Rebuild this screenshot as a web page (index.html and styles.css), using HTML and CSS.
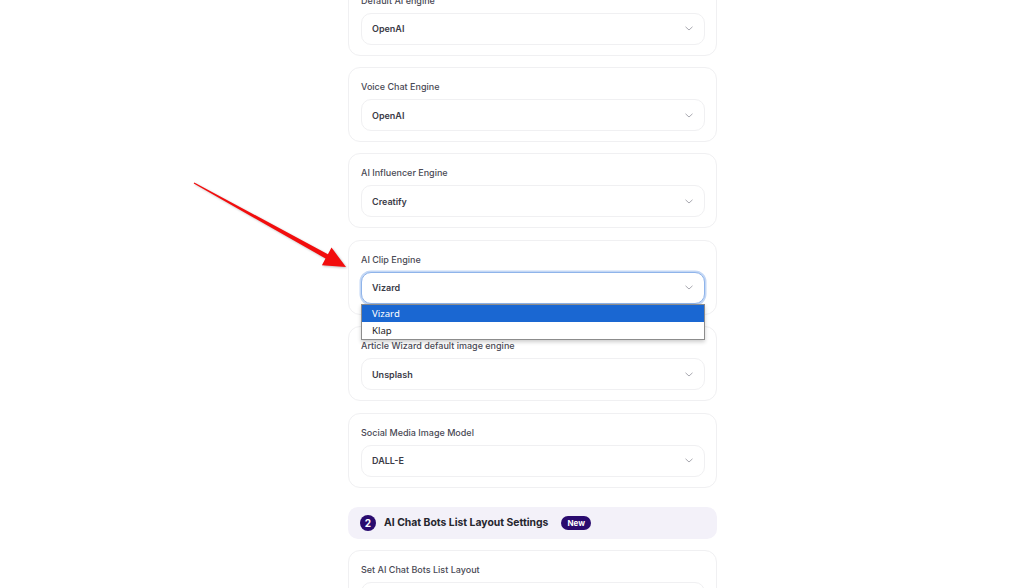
FILE: index.html
```html
<!DOCTYPE html>
<html lang="en">
<head>
<meta charset="utf-8">
<title>Settings</title>
<link rel="stylesheet" href="styles.css">
</head>
<body>
<main class="page">
  <div class="column">
    <section class="card">
      <div class="label">Default AI engine</div>
      <div class="select"><span>OpenAI</span><svg class="chev" viewBox="0 0 8 5"><path d="M0.5 0.8 L4 4 L7.5 0.8"/></svg></div>
    </section>
    <section class="card">
      <div class="label">Voice Chat Engine</div>
      <div class="select"><span>OpenAI</span><svg class="chev" viewBox="0 0 8 5"><path d="M0.5 0.8 L4 4 L7.5 0.8"/></svg></div>
    </section>
    <section class="card">
      <div class="label">AI Influencer Engine</div>
      <div class="select"><span>Creatify</span><svg class="chev" viewBox="0 0 8 5"><path d="M0.5 0.8 L4 4 L7.5 0.8"/></svg></div>
    </section>
    <section class="card">
      <div class="label">AI Clip Engine</div>
      <div class="select focused"><span>Vizard</span><svg class="chev" viewBox="0 0 8 5"><path d="M0.5 0.8 L4 4 L7.5 0.8"/></svg>
        <ul class="dropdown">
          <li class="active">Vizard</li>
          <li>Klap</li>
        </ul>
      </div>
    </section>
    <section class="card">
      <div class="label">Article Wizard default image engine</div>
      <div class="select"><span>Unsplash</span><svg class="chev" viewBox="0 0 8 5"><path d="M0.5 0.8 L4 4 L7.5 0.8"/></svg></div>
    </section>
    <section class="card">
      <div class="label">Social Media Image Model</div>
      <div class="select"><span>DALL-E</span><svg class="chev" viewBox="0 0 8 5"><path d="M0.5 0.8 L4 4 L7.5 0.8"/></svg></div>
    </section>
    <header class="section-head">
      <span class="num">2</span>
      <span class="title">AI Chat Bots List Layout Settings</span>
      <span class="badge">New</span>
    </header>
    <section class="card">
      <div class="label">Set AI Chat Bots List Layout</div>
      <div class="select"><span>Grid</span><svg class="chev" viewBox="0 0 8 5"><path d="M0.5 0.8 L4 4 L7.5 0.8"/></svg></div>
    </section>
  </div>
</main>
<svg class="arrow" width="1024" height="588" viewBox="0 0 1024 588">
  <polygon fill="#f20d0d" points="193.7,183.6 194.3,182.4 327.9,254.2 331.5,247.6 346,267 321.9,265.2 325.5,258.6"/>
</svg>
</body>
</html>
```
FILE: styles.css
```css
* { box-sizing: border-box; }
html, body { margin: 0; padding: 0; background: #fff; }
body {
  font-family: Inter, "Noto Sans", Arial, sans-serif;
  color: #333;
  width: 1024px;
  height: 588px;
  overflow: hidden;
  position: relative;
}
.page {
  display: flex;
  padding-left: 348px;
}
.column {
  width: 369px;
  margin-top: -19.4px;
  display: flex;
  flex-direction: column;
  gap: 11.4px;
}
.card {
  border: 1px solid #f0f0f2;
  border-radius: 12px;
  background: #fff;
  padding: 12px 11px 10px 12px;
}
.label {
  font-size: 9px;
  line-height: 14px;
  font-weight: 500;
  color: #4a4a55;
  margin-bottom: 5px;
}
.select {
  position: relative;
  height: 32px;
  border: 1px solid #f0f0f2;
  border-radius: 10px;
  background: #fff;
  display: flex;
  align-items: center;
  justify-content: space-between;
  padding: 0 11px 0 10px;
  font-size: 9px;
  font-weight: 600;
  color: #3b3b47;
}
.select.focused {
  border: 1px solid #8fb4ea;
  box-shadow: 0 0 0 1.5px #c3d7f5;
}
.chev {
  width: 8px;
  height: 5px;
  fill: none;
  stroke: #a8a8b0;
  stroke-width: 1;
}
.dropdown {
  position: absolute;
  top: 31px;
  left: -1px;
  right: -1px;
  margin: 0;
  padding: 0;
  list-style: none;
  background: #fff;
  border: 1px solid #8c8c8c;
  box-shadow: 0 2px 4px rgba(0,0,0,0.2);
  z-index: 5;
}
.dropdown li {
  height: 17px;
  line-height: 17px;
  padding-left: 10px;
  font-size: 9.6px;
  font-weight: 400;
  color: #222;
  font-family: "Noto Sans", Inter, Arial, sans-serif;
}
.dropdown li.active {
  background: #1a67d2;
  color: #fff;
}
.section-head {
  margin-top: 8px;
  height: 32px;
  border-radius: 10px;
  background: #f3f1f9;
  display: flex;
  align-items: center;
  padding-left: 12px;
}
.num {
  width: 16px;
  height: 16px;
  border-radius: 50%;
  background: #2a0b6f;
  color: #fff;
  font-size: 10px;
  font-weight: 700;
  display: flex;
  align-items: center;
  justify-content: center;
}
.title {
  margin-left: 8px;
  font-size: 10.4px;
  font-weight: 700;
  color: #26262e;
}
.badge {
  margin-left: 13px;
  height: 14px;
  padding: 0 6px;
  border-radius: 8px;
  background: #2a0b6f;
  color: #fff;
  font-size: 8px;
  font-weight: 700;
  display: flex;
  align-items: center;
}
.arrow {
  position: absolute;
  left: 0;
  top: 0;
  pointer-events: none;
  filter: drop-shadow(1px 1px 1px rgba(0,0,0,0.25));
}
```
